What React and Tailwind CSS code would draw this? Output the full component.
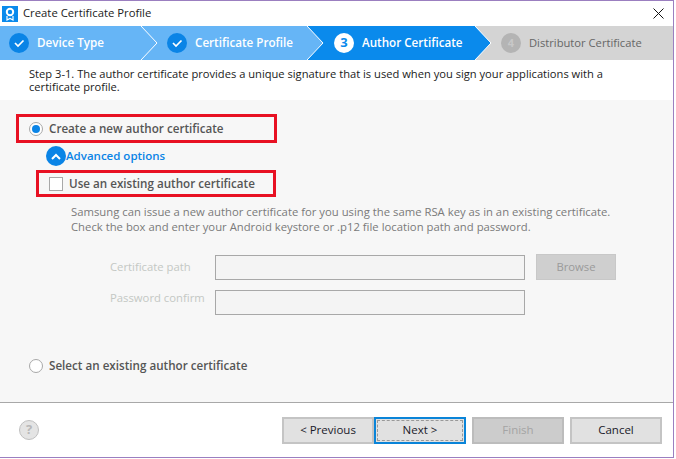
function Check() {
  return (
    <span className="flex h-5 w-5 shrink-0 items-center justify-center rounded-full bg-[#0a84e6]">
      <svg width="12" height="10" viewBox="0 0 12 10" fill="none" stroke="white" strokeWidth="1.7"><path d="M2 5 L5 8 L10.5 2.5" /></svg>
    </span>
  );
}

function Chevron({ fill, left }) {
  return (
    <svg className={`absolute top-0 ${left}`} width="18" height="34" viewBox="0 0 18 34">
      <path d="M0 0 L16 17 L0 34 Z" fill={fill} />
      <path d="M0 0 L16 17 L0 34" fill="none" stroke="white" strokeWidth="1" />
    </svg>
  );
}

function Stepper() {
  return (
    <div className="relative flex h-[34px] text-[11.65px] font-semibold">
      <div className="flex w-[307px] items-center bg-[#66b5f6] text-white">
        <div className="flex w-[157px] items-center pl-[9px]">
          <Check />
          <span className="ml-2">Device Type</span>
        </div>
        <div className="flex items-center pl-[10px]">
          <Check />
          <span className="ml-2">Certificate Profile</span>
        </div>
      </div>
      <div className="flex w-[168px] items-center bg-[#0a8aec] pl-[27px] text-white">
        <span className="flex h-5 w-5 items-center justify-center rounded-full bg-white text-[13px] font-bold text-[#0a8aec]">3</span>
        <span className="ml-2">Author Certificate</span>
      </div>
      <div className="flex flex-1 items-center bg-[#d4d4d4] pl-[26px] text-[11.2px] font-normal text-[#666666]">
        <span className="flex h-5 w-5 items-center justify-center rounded-full bg-[#b4b4b4] text-[11px] font-bold text-[#c8c8c8]">4</span>
        <span className="ml-2">Distributor Certificate</span>
      </div>
      <Chevron fill="#66b5f6" left="left-[141px]" />
      <Chevron fill="#66b5f6" left="left-[307px]" />
      <Chevron fill="#0a8aec" left="left-[475px]" />
    </div>
  );
}

function Button({ children, className }) {
  return (
    <div className={`flex h-[27px] w-[92px] items-center justify-center border-2 text-[11.5px] ${className}`}>{children}</div>
  );
}

export default function App() {
  return (
    <div className="h-[459px] w-[676px] overflow-hidden bg-white text-[11.65px] text-[#1a1a1a]" style={{ fontFamily: '"Open Sans", sans-serif' }}>
      <div className="flex h-[458px] w-[674px] flex-col border-t border-r border-b border-[#9b7fc0]">
        <div className="flex h-[25px] items-center pl-[2px] pr-[9px]">
          <span className="flex h-4 w-4 items-center justify-center bg-[#0a8aec]">
            <svg width="12" height="14" viewBox="0 0 12 14" fill="none"><circle cx="6" cy="5" r="3.2" stroke="white" strokeWidth="2" /><path d="M3 9 V13 L6 11.5 L9 13 V9" stroke="white" strokeWidth="1.2" /></svg>
          </span>
          <span className="ml-[5px] flex-1 text-[11.3px] text-[#222222]">Create Certificate Profile</span>
          <svg width="11" height="11" viewBox="0 0 11 11" stroke="#111" strokeWidth="1"><path d="M0.5 0.5 L10.5 10.5 M10.5 0.5 L0.5 10.5" /></svg>
        </div>
        <Stepper />
        <div className="h-[40px] pl-[29px] pr-10 pt-[7px] text-[11.15px] leading-[13px] text-[#1a1a1a]">
          Step 3-1. The author certificate provides a unique signature that is used when you sign your applications with a certificate profile.
        </div>
        <div className="h-[303px] border-b border-[#a8a8a8] bg-[#f7f7f7] pl-4">
          <div className="mt-[14px] flex h-[29px] w-[261px] items-center border-[3px] border-[#e81123] pl-[10px] font-semibold text-[#555555]">
            <span className="flex h-[14px] w-[14px] items-center justify-center rounded-full border border-[#a8a8a8] bg-white">
              <span className="h-2 w-2 rounded-full bg-[#0a84e6]" />
            </span>
            <span className="ml-[6px]">Create a new author certificate</span>
          </div>
          <div className="mt-[3px] flex h-5 items-center pl-[30px] text-[11.5px] font-semibold text-[#0a84e6]">
            <span className="flex h-5 w-5 items-center justify-center rounded-full bg-[#0a84e6]">
              <svg width="10" height="7" viewBox="0 0 10 7" fill="none" stroke="white" strokeWidth="2"><path d="M1 6 L5 2 L9 6" /></svg>
            </span>
            <span>Advanced options</span>
          </div>
          <div className="ml-5 mt-[4px] flex h-[27px] w-[240px] items-center border-[3px] border-[#e81123] pl-[10px] font-semibold text-[#555555]">
            <span className="h-[14px] w-[14px] border border-[#a8a8a8] bg-white" />
            <span className="ml-[6px]">Use an existing author certificate</span>
          </div>
          <div className="ml-[55px] mt-[7px] text-[11.3px] leading-[15px] text-[#7a7a7a]">
            Samsung can issue a new author certificate for you using the same RSA key as in an existing certificate.<br />
            Check the box and enter your Android keystore or .p12 file location path and password.
          </div>
          <div className="mt-[20px] flex items-center text-[11.3px] text-[#c4c8c4]">
            <span className="ml-[94px] w-[105px]">Certificate path</span>
            <div className="h-[25px] w-[310px] border border-[#a8a8a8] bg-[#f4f4f4]" />
            <div className="ml-[11px] flex h-[26px] w-[80px] items-center justify-center border border-[#c8c8c8] bg-[#cfcfcf] text-[#9a9a9a]">Browse</div>
          </div>
          <div className="mt-[10px] flex items-start text-[11.3px] text-[#c4c8c4]">
            <span className="ml-[94px] w-[105px] leading-[15px]">Password confirm</span>
            <div className="h-[25px] w-[310px] border border-[#a8a8a8] bg-[#f4f4f4]" />
          </div>
          <div className="ml-[13px] mt-[42px] flex items-center font-semibold text-[#555555]">
            <span className="h-[14px] w-[14px] rounded-full border border-[#a8a8a8] bg-white" />
            <span className="ml-[6px]">Select an existing author certificate</span>
          </div>
        </div>
        <div className="flex flex-1 items-center pl-[19px]">
          <span className="flex h-5 w-5 items-center justify-center rounded-full border border-[#c0c0c0] bg-[#e4e4e4] text-[13px] font-bold text-[#b8b8b8]">?</span>
          <div className="ml-[243px] flex items-center">
            <Button className="border-[#c4c4c4] bg-[#e1e1e1] text-[#1a1a2a]">&lt; Previous</Button>
            <div className="flex h-[27px] w-[92px] items-center justify-center border-2 border-[#0a84d8] bg-[#e1e1e1] p-px text-[11.5px]">
              <div className="flex h-full w-full items-center justify-center border border-dashed border-[#999999] text-[#1a1a2a]">Next &gt;</div>
            </div>
            <Button className="ml-[6px] border-[#bcbcbc] bg-[#cccccc] text-[#a4a4a4]">Finish</Button>
            <Button className="ml-[6px] border-[#c4c4c4] bg-[#e1e1e1] text-[#1a1a2a]">Cancel</Button>
          </div>
        </div>
      </div>
    </div>
  );
}
